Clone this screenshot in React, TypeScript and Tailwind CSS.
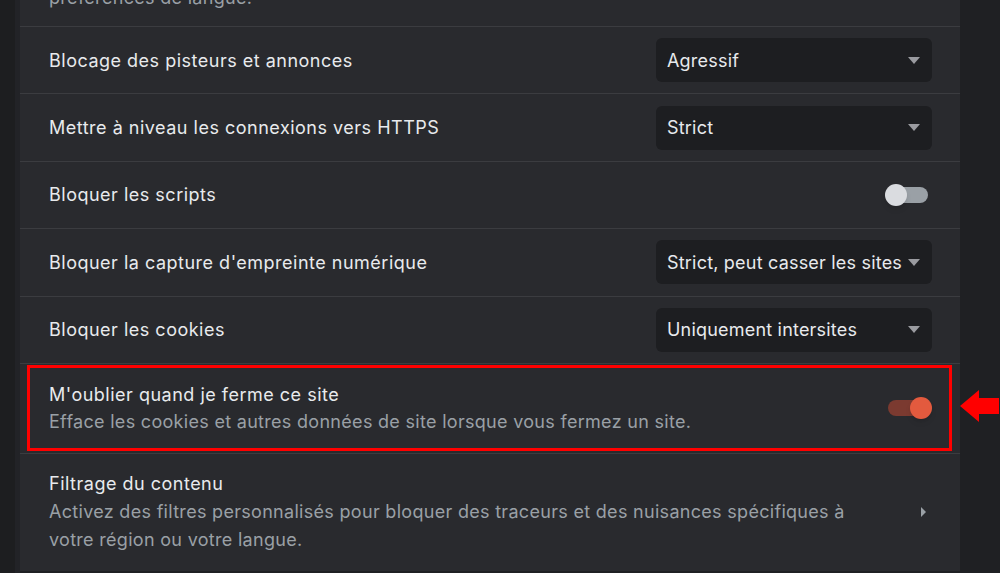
const rows = [
  { label: 'Blocage des pisteurs et annonces', select: 'Agressif' },
  { label: 'Mettre à niveau les connexions vers HTTPS', select: 'Strict' },
  { label: 'Bloquer les scripts', toggle: false },
  { label: "Bloquer la capture d'empreinte numérique", select: 'Strict, peut casser les sites' },
  { label: 'Bloquer les cookies', select: 'Uniquement intersites' },
];

function Select({ value }: { value: string }) {
  return (
    <div className="flex h-[44px] w-[276px] items-center justify-between rounded-md bg-[#1d1e21] pl-[11px] pr-[12px] text-[18px] tracking-[0.2px] text-[#e8eaed]">
      <span className="whitespace-nowrap">{value}</span>
      <span className="h-0 w-0 border-x-[6px] border-t-[7px] border-x-transparent border-t-[#9a9ba0]" />
    </div>
  );
}

function Toggle({ on }: { on: boolean }) {
  return (
    <div className="relative h-[22px] w-[47px]">
      <div
        className={`absolute left-[3px] top-[3px] h-[16px] w-[40px] rounded-full ${on ? 'bg-[#7b3a30]' : 'bg-[#9aa0a6]'}`}
      />
      <div
        className={`absolute top-0 h-[22px] w-[22px] rounded-full shadow-md ${on ? 'right-0 bg-[#e35a3e]' : 'left-0 bg-[#dadce0]'}`}
      />
    </div>
  );
}

export default function App() {
  return (
    <div
      className="flex h-[573px] w-[1000px] overflow-hidden bg-[#1f2023] tracking-[0.5px]"
      style={{ fontFamily: 'Inter, "Noto Sans", sans-serif' }}
    >
      <div className="w-[15px] bg-[#1d1e20]" />
      <div className="w-[5px] bg-[#222327]" />
      <div className="flex h-[571px] w-[940px] flex-col bg-[#292a2e]">
        <div className="flex h-[27px] shrink-0 items-end overflow-hidden border-b border-[#3b3c40] px-[29px]">
          <span className="mb-[16px] text-[18px] leading-[24px] tracking-[0.3px] text-[#9aa0a6]">préférences de langue.</span>
        </div>
        {rows.map((r) => (
          <div
            key={r.label}
            className="flex h-[67.4px] shrink-0 items-center justify-between border-b border-[#3b3c40] pl-[29px] pr-[28px]"
          >
            <span className="text-[18px] text-[#e8eaed]">{r.label}</span>
            {r.select ? <Select value={r.select} /> : <Toggle on={false} />}
          </div>
        ))}
        <div className="flex h-[90px] shrink-0 items-center border-b border-[#3b3c40] pl-[7px] pr-[8px]">
          <div className="flex h-[86px] flex-1 items-center justify-between border-[3px] border-[#ff0000] pl-[19px] pr-[17px]">
            <div className="flex flex-col">
              <span className="text-[18px] leading-[27px] text-[#e8eaed]">M'oublier quand je ferme ce site</span>
              <span className="text-[18px] leading-[27px] tracking-[0.3px] text-[#9aa0a6]">
                Efface les cookies et autres données de site lorsque vous fermez un site.
              </span>
            </div>
            <Toggle on={true} />
          </div>
        </div>
        <div className="flex flex-1 items-start justify-between pl-[29px] pr-[34px] pt-[16px]">
          <div className="flex w-[822px] flex-col">
            <span className="text-[18px] leading-[28px] text-[#e8eaed]">Filtrage du contenu</span>
            <span className="text-[18px] leading-[28px] tracking-[0.3px] text-[#9aa0a6]">
              Activez des filtres personnalisés pour bloquer des traceurs et des nuisances spécifiques à votre région ou votre langue.
            </span>
          </div>
          <div className="mt-[37px] h-0 w-0 border-y-[5px] border-l-[5px] border-y-transparent border-l-[#9aa0a6]" />
        </div>
      </div>
      <div className="flex flex-1 flex-col">
        <div className="h-[389px]" />
        <svg width="40" height="34" viewBox="0 0 40 34" className="-ml-[1px]">
          <polygon points="1,17 20,1 20,9 40,9 40,25 20,25 20,33" fill="#ff0000" />
        </svg>
      </div>
    </div>
  );
}
